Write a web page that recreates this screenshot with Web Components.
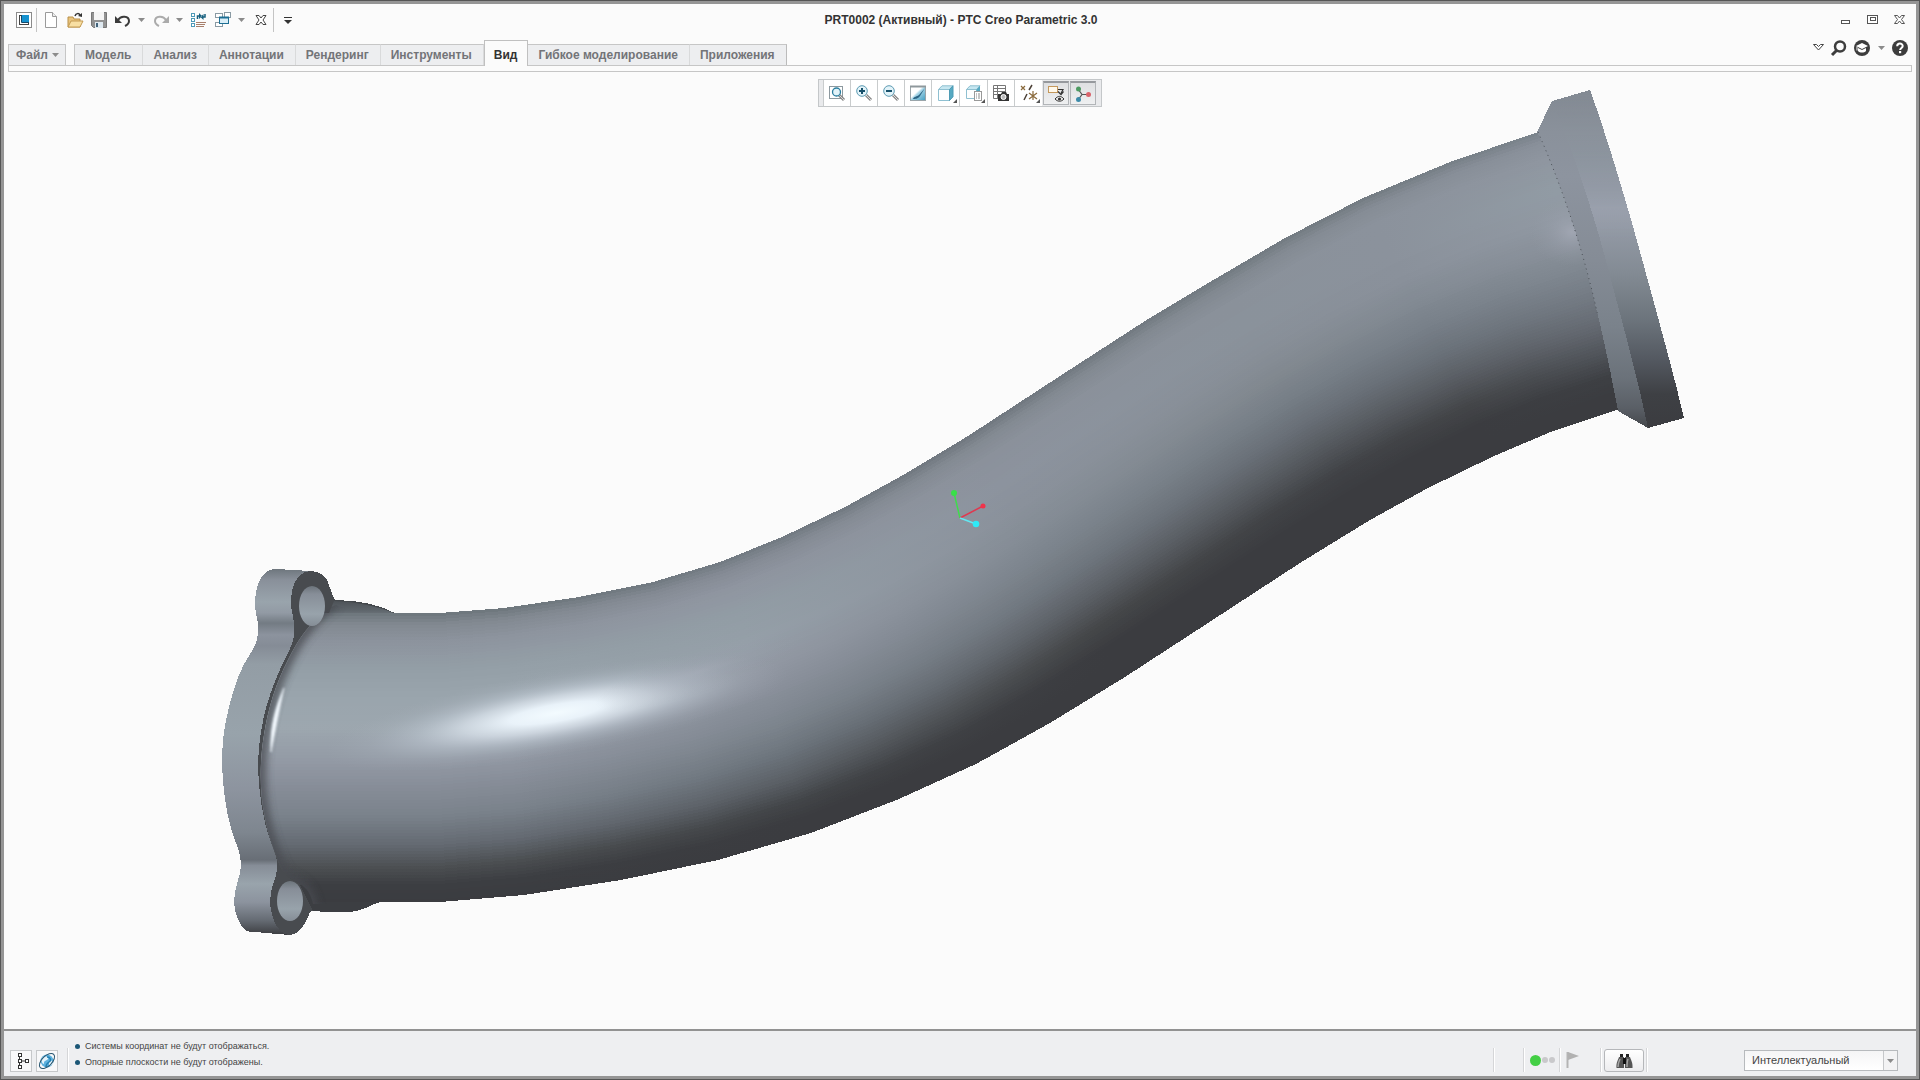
<!DOCTYPE html>
<html lang="ru">
<head>
<meta charset="utf-8">
<title>PRT0002 (Активный) - PTC Creo Parametric 3.0</title>
<style>
html, body { margin: 0; height: 100%; }
body { font-family: "Liberation Sans", Arial, sans-serif; font-size: 12px; color: #333; overflow: hidden; }
</style>
</head>
<body>
<creo-window></creo-window>

<script>
const RESET = `
  :host, *, *::before { box-sizing: border-box; }
  button { border: 0; background: none; padding: 0; margin: 0; font: inherit; color: inherit; display: block; }
  svg { display: block; }
`;

/* ---------- icon set ---------- */
const ICONS = {
  app: `<rect x=".5" y=".5" width="15" height="15" fill="#fff" stroke="#8b8b8b"/><rect x="3.5" y="3.5" width="9" height="9" fill="#fff" stroke="#444"/><rect x="6" y="3" width="7" height="7" fill="#1592cf"/><path d="M5.500 3v7.500H13" fill="none" stroke="#14496b"/>`,
  file: `<path d="M2.5.5h7l4 4v11h-11z" fill="#fff" stroke="#9a9a9a"/><path d="M9.500.5v4h4" fill="#eee" stroke="#9a9a9a"/>`,
  open: `<path d="M1 15V5h5l1 2h6v8z" fill="#e9c47d" stroke="#b98f46"/><path d="M1 15l3-6h12l-3 6z" fill="#f8dfa3" stroke="#c39a52"/><path d="M8 4c1-3 4-3 5-1" fill="none" stroke="#333" stroke-width="1.500"/><path d="M11 4l4-3v4z" fill="#333"/>`,
  save: `<path d="M.5.5h15v15H2.500l-2-2z" fill="#929292" stroke="#777"/><rect x="3" y="0" width="10" height="8" fill="#f5f5f5"/><rect x="4" y="10" width="8" height="6" fill="#dfe9f0"/><rect x="5" y="11" width="2" height="4" fill="#42637b"/>`,
  undo: `<path d="M3 8c3-5 11-4 11 1 0 3-2 4-4 5" fill="none" stroke="#3c3c3c" stroke-width="2"/><path d="M0 4v7h7z" fill="#3c3c3c"/>`,
  redo: `<path d="M13 8C10 3 2 4 2 9c0 3 2 4 4 5" fill="none" stroke="#ababab" stroke-width="2"/><path d="M16 4v7H9z" fill="#ababab"/>`,
  regen: `<g fill="#fff" stroke="#4d99b7"><rect x=".5" y="1.500" width="3" height="3"/><rect x=".5" y="6.500" width="3" height="3"/><rect x=".5" y="11.500" width="3" height="3"/></g><path d="M6.500 7V4h2M14 2v3h-2" fill="none" stroke="#17607f" stroke-width="1.500"/><path d="M8 1l3 3-3 3zM12.500 2l-3 3 3 3z" fill="#17607f"/><path d="M5 10.500h10M5 12.500h9M5 14.500h8" stroke="#a77f6b"/>`,
  windows: `<g fill="#fff" stroke="#8a9aa3"><rect x=".5" y="1.500" width="7" height="4"/><rect x=".5" y="10.500" width="7" height="4"/><rect x="9.500" y=".5" width="6" height="5"/></g><rect x="4.500" y="5.500" width="9" height="6" fill="#d9eef7" stroke="#1d6f94"/><path d="M4 5.500h10" stroke="#1d6f94" stroke-width="2"/>`,
  cross: `<path d="M3 3.500h3l2 2.500 2-2.500h3L10 8l3 4.500h-3L8 10l-2 2.500H3L6 8z" fill="#fff" stroke="#444"/>`,
  caretG: `<path d="M1 6h7l-3.500 4z" fill="#8b8b8b"/>`,
  caretD: `<path d="M4 5.500h8" stroke="#333"/><path d="M4 8h8l-4 4z" fill="#333"/>`,
  min: `<rect x="1.500" y="8.500" width="8" height="3" fill="#fff" stroke="#555"/>`,
  restore: `<rect x=".5" y="3.500" width="10" height="8" fill="#fff" stroke="#555"/><rect x="3.500" y="5.500" width="5" height="3" fill="#fff" stroke="#555"/>`,
  close: `<path d="M.5 3.500h3L5.500 6l2-2.500h3l-3 4 3 4h-3l-2-2.500-2 2.500h-3l3-4z" fill="#fff" stroke="#555"/>`,
  chev: `<path d="M.5 4.500h3l2 2 2-2h3l-5 5.500z" fill="#fff" stroke="#444"/>`,
  search: `<circle cx="9" cy="6.500" r="5" fill="none" stroke="#3d3d3d" stroke-width="2.500"/><path d="M5.500 10.500L1 15" stroke="#3d3d3d" stroke-width="3"/>`,
  learn: `<circle cx="8" cy="8" r="8" fill="#3d3d3d"/><path d="M2 6l6-3 6 3-6 3z" fill="#fff"/><path d="M4 8v3c2 2 6 2 8 0V8l-4 2z" fill="#fff"/><path d="M3 6.500v4" stroke="#fff"/>`,
  help: `<circle cx="8" cy="8" r="8" fill="#3d3d3d"/><path d="M5.200 6.200c0-3.600 5.600-3.400 5.500-.2 0 1.900-2.600 2-2.600 4" fill="none" stroke="#fff" stroke-width="2"/><rect x="7" y="11" width="2.200" height="2.200" fill="#fff"/>`,
  refit: `<rect x=".5" y="1.500" width="13" height="12" fill="#fff" stroke="#8d999f"/><path d="M10 10l5 5" stroke="#888" stroke-width="3"/><path d="M10 10l5 5" stroke="#d8d8d8"/><circle cx="7.500" cy="7" r="4" fill="#e2f3f9" stroke="#2a7d9e" stroke-width="1.300"/>`,
  zin: `<path d="M10 10l5 5" stroke="#888" stroke-width="3"/><path d="M10 10l5 5" stroke="#ddd"/><circle cx="6" cy="6" r="5.300" fill="#e2f3f9" stroke="#5d9bb3"/><path d="M3 6h6M6 3v6" stroke="#17506b" stroke-width="2"/>`,
  zout: `<path d="M10 10l5 5" stroke="#888" stroke-width="3"/><path d="M10 10l5 5" stroke="#ddd"/><circle cx="6" cy="6" r="5.300" fill="#e2f3f9" stroke="#5d9bb3"/><path d="M3 6h6" stroke="#17506b" stroke-width="2"/>`,
  repaint: `<defs><linearGradient id="g" x1="0" y1="0" x2="1" y2="1"><stop offset=".4" stop-color="#fff"/><stop offset=".5" stop-color="#a5d4e6"/><stop offset="1" stop-color="#3f9dc2"/></linearGradient></defs><rect x=".5" y="1.500" width="15" height="14" fill="url(#g)" stroke="#9aa5aa"/><path d="M3 14c1-3 4-2 6-4l6-7-5 8c-2 3-5 3-7 3z" fill="#2b6484"/><path d="M0 1.500h16" stroke="#8f989c" stroke-width="2"/>`,
  cube: `<path d="M.5 4.500h11v11H.5z" fill="#fdfefe" stroke="#8fc0d1"/><path d="M.5 4.500L4 .8h11l-3.500 3.700z" fill="#c6e7f1" stroke="#8fc0d1"/><path d="M11.500 4.500L15 .8v11l-3.500 3.700z" fill="#56a9c2" stroke="#4d9bb4"/>`,
  cubelist: `<path d="M.5 4.500h10v9H.5z" fill="#fdfefe" stroke="#8fc0d1"/><path d="M.5 4.500L4 .8h10l-3.500 3.700z" fill="#c6e7f1" stroke="#8fc0d1"/><path d="M10.500 4.500L14 .8v9l-3.500 3.700z" fill="#56a9c2"/><rect x="8.500" y="6.500" width="7" height="9" fill="#fff" stroke="#999"/><path d="M10 9h1m1 0h2M10 11h1m1 0h2M10 13h1m1 0h2" stroke="#888"/>`,
  camera: `<path d="M.5.500h12v13H.5zM.5 3.500h12M.5 6.500h12M.5 9.500h12M4.500.500v13" fill="#fff" stroke="#777"/><path d="M5 9h3l1-2h4l1 2h2v7H5z" fill="#333"/><circle cx="10.500" cy="12" r="2.500" fill="#bbb" stroke="#fff"/>`,
  datum: `<g stroke="#8a6a3c" fill="none" stroke-width="1.200"><path d="M0 1l4 4M4 1L0 5M12 6v9M8 8l8 6M16 8l-8 6"/></g><path d="M11 0L8 5M6 9l-3 6" stroke="#4d4238" stroke-width="1.500"/>`,
  annot: `<rect x=".5" y=".5" width="9" height="6" fill="#fff8ea" stroke="#c4985c"/><path d="M10 3.500h5l-2 4" fill="none" stroke="#333" stroke-width="1.200"/><path d="M10 5.500l3 3 2.500-3" fill="none" stroke="#333" stroke-width="1.200"/><path d="M7 13c3-3.500 6-3.500 9 0-3 3-6 3-9 0z" fill="#eee" stroke="#333"/><circle cx="11.500" cy="13" r="1.600" fill="#333"/>`,
  spin: `<path d="M3 3l4 5.500L3 14M7 8.500h7" fill="none" stroke="#555" stroke-width="1.200"/><circle cx="3.500" cy="3" r="2.500" fill="#4d9b62"/><circle cx="3.500" cy="13.500" r="2.500" fill="#3c8ba9"/><circle cx="13.500" cy="8.500" r="2.500" fill="#d9636b"/>`,
  tree: `<path d="M6.500 4v8M6.500 8h6" stroke="#333" fill="none"/><g fill="#fff" stroke="#333"><rect x="5.500" y=".5" width="3" height="3"/><rect x="5.500" y="6.500" width="3" height="3"/><rect x="5.500" y="12.500" width="3" height="3"/><rect x="12.500" y="6.500" width="3" height="3"/></g>`,
  globe: `<circle cx="8" cy="8" r="6.500" fill="#5db1de"/><path d="M4 4c3-2 6 0 5 2S5 7 5 10 2 8 2 7zM10 8c3-1 4 0 4 2s-3 3-4 3z" fill="#e3f3fb"/><path d="M8 4c3 0 5 3 2 5s-3 3-3 5" fill="none" stroke="#2380b2" stroke-width="1.500"/><ellipse cx="8" cy="8" rx="9.500" ry="5" transform="rotate(-45 8 8)" fill="none" stroke="#27556f"/>`,
  bino: `<path d="M4 1h3v4H4zM10 1h3v4h-3z" fill="#222"/><path d="M3 4h5v11H.5C0 10 2 7 3 4z" fill="#555"/><path d="M9 4h5c1 3 3 6 2.500 11H9z" fill="#555"/><path d="M7 5h3v6H7z" fill="#111"/><path d="M2 14c0-4 1-6 2-8M11 14c0-4 0-6 1-8" stroke="#a5a5a5" stroke-width="1.500" fill="none"/>`,
  flag: `<path d="M1.500 0v16" stroke="#b4b4b4" stroke-width="2"/><path d="M2 0l11 4-11 4z" fill="#b1b1b1"/>`
};
class CreoIcon extends HTMLElement {
  constructor() { super(); this.attachShadow({ mode: 'open' }); }
  connectedCallback() {
    const w = +(this.getAttribute('w') || 16), h = +(this.getAttribute('h') || 16);
    this.shadowRoot.innerHTML = `<style>:host{display:block;flex:none}svg{display:block;overflow:visible}</style>
      <svg width="${w}" height="${h}" viewBox="0 0 ${w} ${h}" aria-hidden="true">${ICONS[this.getAttribute('name')]}</svg>`;
  }
}
customElements.define('creo-icon', CreoIcon);

function define(name, html) {
  const tpl = document.createElement('template');
  tpl.innerHTML = html;
  customElements.define(name, class extends HTMLElement {
    constructor() { super(); this.attachShadow({ mode: 'open' }).append(tpl.content.cloneNode(true)); }
  });
}

/* ---------- title bar ---------- */
const tool = (icon, label, cls = '', w = 16) => `<button class="${cls}" aria-label="${label}"><creo-icon name="${icon}" w="${w}"></creo-icon></button>`;
define('creo-titlebar', `<style>${RESET}
  :host { display: grid; grid-template-columns: 1fr auto 1fr; align-items: center; height: 32px; padding: 0 10px 0 12px; }
  .quick { display: flex; align-items: center; gap: 8px; }
  .caret { margin-left: -2px; }
  .sep { width: 1px; height: 24px; background: #c4c4c4; margin: 0 -2px 0 -4px; }
  h1 { margin: 0; font-size: 12px; line-height: 16px; font-weight: bold; color: #333; }
  .win { display: flex; gap: 15px; justify-content: flex-end; }
</style>
<div class="quick">
  ${tool('app', 'Окно')}<span class="sep"></span>
  ${tool('file', 'Создать')}${tool('open', 'Открыть')}${tool('save', 'Сохранить')}
  ${tool('undo', 'Отменить')}${tool('caretG', 'Список отмен', 'caret', 8)}
  ${tool('redo', 'Повторить')}${tool('caretG', 'Список повторов', 'caret', 8)}
  ${tool('regen', 'Регенерировать')}${tool('windows', 'Окна')}${tool('caretG', 'Список окон', 'caret', 8)}
  ${tool('cross', 'Закрыть окно')}<span class="sep"></span>${tool('caretD', 'Настроить')}
</div>
<h1>PRT0002 (Активный) - PTC Creo Parametric 3.0</h1>
<div class="win">${tool('min', 'Свернуть', '', 12)}${tool('restore', 'Восстановить', '', 12)}${tool('close', 'Закрыть', '', 12)}</div>`);

/* ---------- ribbon ---------- */
define('creo-tab', `<style>${RESET}
  :host { display: block; height: 21px; border-top: 1px solid #c6c6c6; border-right: 1px solid #d9dadb; background: #edeef0; color: #737478; }
  button { height: 20px; padding: 0 11px 0 10px; font-weight: bold; font-size: 12px; line-height: 20px; display: flex; align-items: center; gap: 3px; white-space: nowrap; }
  :host([first]) { border-left: 1px solid #c6c6c6; }
  :host([last]) { border-right-color: #bbb; }
  :host([file]) { border: 1px solid #c6c6c6; border-bottom: 0; margin-right: 8px; }
  :host([file]) button { padding: 0 6px 0 7px; }
  :host([active]) { height: 26px; margin-bottom: -1px; border: 1px solid #c0c0c0; border-bottom: 0; background: #fbfbfb; color: #333; position: relative; }
  :host([active]) button { height: 25px; padding: 3px 10px 0 9px; }
</style><button role="tab"><slot></slot></button>`);

define('creo-ribbon', `<style>${RESET}
  :host { display: block; padding: 0 4px; }
  .row { display: flex; justify-content: space-between; align-items: flex-end; height: 29px; }
  .tabs { display: flex; align-items: flex-end; }
  .help { display: flex; align-items: center; gap: 7px; height: 16px; align-self: flex-start; margin: 4px 4px 0 0; }
  .strip { height: 7px; border: 1px solid #c6c6c6; background: #fbfbfb; }
</style>
<div class="row">
  <nav class="tabs" role="tablist">
    <creo-tab file>Файл <creo-icon name="caretG" w="8"></creo-icon></creo-tab>
    <creo-tab first>Модель</creo-tab><creo-tab>Анализ</creo-tab><creo-tab>Аннотации</creo-tab>
    <creo-tab>Рендеринг</creo-tab><creo-tab>Инструменты</creo-tab><creo-tab active>Вид</creo-tab>
    <creo-tab>Гибкое моделирование</creo-tab><creo-tab last>Приложения</creo-tab>
  </nav>
  <div class="help">${tool('chev', 'Свернуть ленту', '', 11)}${tool('search', 'Поиск')}${tool('learn', 'Обучение')}${tool('caretG', 'Ещё', 'c', 8)}${tool('help', 'Справка')}</div>
</div>
<div class="strip"></div>`);

/* ---------- floating graphics toolbar ---------- */
const gbtn = (icon, label, cls = '') => `<button class="${cls}" aria-label="${label}"><creo-icon name="${icon}"></creo-icon></button>`;
define('creo-viewbar', `<style>${RESET}
  :host { display: flex; height: 28px; border: 1px solid #c4c7c9; background: #e9eaec; padding: 0 5px 0 4px; }
  button { width: 27px; height: 26px; background: #fff; border-left: 1px solid #c9cccd; display: flex; align-items: center; justify-content: center; position: relative; }
  .menu { width: 28px; }
  .menu::after { content: ""; position: absolute; right: 2px; bottom: 3px; border: 2px solid transparent; border-right-color: #555; border-bottom-color: #555; }
  .on { background: linear-gradient(#dfe0e2, #eff0f1); border: 1px solid #b2b5b8; border-top: 2px solid #96999d; margin: 1px 0 1px 1px; height: 24px; width: 26px; }
</style>
${gbtn('refit', 'Вписать')}${gbtn('zin', 'Увеличить')}${gbtn('zout', 'Уменьшить')}${gbtn('repaint', 'Перерисовать')}
${gbtn('cube', 'Стиль отображения', 'menu')}${gbtn('cubelist', 'Сохранённые ориентации', 'menu')}${gbtn('camera', 'Диспетчер видов')}
${gbtn('datum', 'Фильтры опорных элементов', 'menu')}${gbtn('annot', 'Показ аннотаций', 'on')}${gbtn('spin', 'Центр вращения', 'on')}`);

/* ---------- shaded model ---------- */
const TOP = [[240,613],[396,613],[440,613],[504,608],[579,597],[653,582],[720,562],[782,537],[845,507],[905,474],[968,436],[1060,376],[1145,321],[1215,279],[1285,238],[1363,198],[1450,162],[1538,132],[1590,116]];
const BOT = [[240,902],[378,902],[440,902],[524,895],[621,880],[718,860],[811,833],[899,799],[976,764],[1050,723],[1125,677],[1208,623],[1300,563],[1370,520],[1428,488],[1494,456],[1553,431],[1619,409],[1660,395]];
const LEVEL = [0,.04,.1,.2,.3,.4,.5,.6,.7,.8,.88,.94,1];
const RAMPS = [
  [0,  '6c757b 828991 8b929c 949fa7 9aa5ad 9da7af 949ba6 878d98 7a828b 646a72 4d5053 3c3e42 3b3c40'],
  [3,  '6c757b 828991 8d949e 949fa7 9aa5ad 9ca6ae 949ba6 878d98 7a828b 646a72 4b4e51 3c3e42 3b3c40'],
  [6,  '727a81 858b95 8f95a0 929da5 959fa8 9298a3 888e99 7d858e 6d757d 595e64 424548 3b3c40 3b3c40'],
  [10, '6f777e 838a92 8b919b 8c939e 8a919b 848c95 7b838b 6e757d 5c6066 454749 3b3c40 3b3c40 3b3c40'],
  [13, '727a81 828991 8a919a 8a929b 888f98 81888f 757d85 676d75 55595e 404246 3b3c40 3b3c40 3b3c40'],
  [15, '737b82 858c95 8b929c 8b929c 8a919b 828a93 777f88 6a7179 595d63 444649 3b3c40 3b3c40 3b3c40'],
  [17, '7a838b 89909a 8f96a0 919ba4 9199a3 8a919b 7f8790 737a83 656a72 50545a 3e4044 3b3c40 3b3c40'],
  [18, '7a838b 89909a 8f96a0 919ba4 9199a3 8a919b 7f8790 737a83 656a72 50545a 3e4044 3b3c40 3b3c40']
].map(([s, c]) => [s, c.split(' ').map(h => [0, 2, 4].map(i => parseInt(h.substr(i, 2), 16)))]);
const mix = (a, b, k) => a + (b - a) * k;
function rampColor(ramp, t) {
  let i = 0;
  while (i < LEVEL.length - 2 && t > LEVEL[i + 1]) i++;
  const k = (t - LEVEL[i]) / (LEVEL[i + 1] - LEVEL[i]);
  return 'rgb(' + ramp[i].map((v, c) => Math.round(mix(v, ramp[i + 1][c], k))).join() + ')';
}
function pipeBands(count) {
  let defs = '', out = '';
  const at = t => TOP.map((p, i) => [mix(p[0], BOT[i][0], t), mix(p[1], BOT[i][1], t)]);
  for (let n = 0; n < count; n++) {
    const mid = (n + .5) / count, line = at(mid), x0 = line[0][0], x1 = line[line.length - 1][0];
    defs += `<linearGradient id="b${n}" gradientUnits="userSpaceOnUse" x1="${x0}" x2="${x1}" y1="0" y2="0">` +
      RAMPS.map(([s, r]) => `<stop offset="${((line[s][0] - x0) / (x1 - x0)).toFixed(4)}" stop-color="${rampColor(r, mid)}"/>`).join('') + '</linearGradient>';
    const a = at(n / count), b = at(Math.min(1, (n + 2) / count)).reverse();
    out += `<polygon fill="url(#b${n})" points="${a.concat(b).map(p => p.map(v => v.toFixed(1)).join()).join(' ')}"/>`;
  }
  return `<defs>${defs}</defs>${out}`;
}
const stops = list => list.map(([o, c, a]) => `<stop offset="${o}" stop-color="${c}"${a === undefined ? '' : ` stop-opacity="${a}"`}/>`).join('');
const RIM = 'M336 603C325 608 318 617 309 627C300 637 294 648 288 660C276 683 268 708 264 735C259 765 260 795 265 818C269 838 275 854 281 868C287 880 296 880 303 886C309 892 312 900 313 911';
define('creo-model', `<style>:host{display:block}svg{display:block;width:100%;height:100%}</style>
<svg viewBox="4 72 1912 957" role="img" aria-label="Модель PRT0002">
  <defs>
    <linearGradient id="side" gradientUnits="userSpaceOnUse" x1="0" x2="0" y1="569" y2="935">${stops([[0,'#6e767d'],[.03,'#89909a'],[.09,'#99a4ac'],[.12,'#929aa4'],[.148,'#737b83'],[.18,'#8c939e'],[.21,'#858c96'],[.26,'#939da5'],[.45,'#98a3ab'],[.6,'#8d949f'],[.72,'#7e868f'],[.795,'#686e76'],[.81,'#868d97'],[.86,'#99a4ac'],[.91,'#8c939e'],[.96,'#656b73'],[1,'#3b3c40']])}</linearGradient>
    <linearGradient id="hole" x1="0" x2="0" y1="0" y2="1">${stops([[0,'#6c747b'],[.2,'#878e98'],[.7,'#98a3ab'],[1,'#858d96']])}</linearGradient>
    <linearGradient id="rim" gradientUnits="userSpaceOnUse" x1="0" x2="0" y1="90" y2="428">${stops([[0,'#868d96'],[.1,'#8b939c'],[.2,'#909ba3'],[.28,'#989fab'],[.35,'#a0a6b3'],[.44,'#8f96a1'],[.54,'#838b94'],[.68,'#6c747c'],[.8,'#535860'],[.9,'#3e4044'],[1,'#3b3c40']])}</linearGradient>
    <linearGradient id="cone" gradientUnits="userSpaceOnUse" x1="0" x2="0" y1="92" y2="428">${stops([[0,'#838a93'],[.12,'#8a919b'],[.25,'#8d949f'],[.5,'#858c96'],[.7,'#7a828b'],[.85,'#6b727a'],[.94,'#5a5f66'],[1,'#44474b']])}</linearGradient>
    <linearGradient id="rimfade" gradientUnits="userSpaceOnUse" x1="0" x2="0" y1="90" y2="240">${stops([[0,'#000'],[.4,'#333'],[1,'#fff']])}</linearGradient>
    <radialGradient id="shine">${stops([[0,'#f3fbff',1],[.2,'#eef7fe',.94],[.4,'#dfe8f1',.7],[.6,'#c9d3de',.4],[.8,'#b7c0cb',.15],[1,'#a8b0bb',0]])}</radialGradient>
    <radialGradient id="glow">${stops([[0,'#a9aebb',.7],[.5,'#9ca2ae',.35],[1,'#949ba5',0]])}</radialGradient>
    <linearGradient id="bulge" gradientUnits="userSpaceOnUse" x1="0" x2="0" y1="600" y2="628">${stops([[0,'#4b5055'],[.35,'#5d646a'],[.6,'#727a81'],[1,'#858c95']])}</linearGradient>
    <filter id="soft" x="-50%" y="-50%" width="200%" height="200%"><feGaussianBlur stdDeviation="4"/></filter>
    <filter id="thin" x="-200%" y="-50%" width="500%" height="200%"><feGaussianBlur stdDeviation="1.200"/></filter>
    <clipPath id="flow"><path d="M336 605C348 610 372 613 396 613L440 613L440 500L1538 100L1700 110L1700 400L1500 560L900 860L440 904L378 903C350 904 330 904 313 904C311 896 309 891 303 886C296 880 287 880 281 868C275 854 269 838 265 818C260 795 259 765 264 735C268 708 276 683 288 660C294 648 300 637 309 627C318 617 325 608 336 605Z"/></clipPath>
  </defs>
  <g shape-rendering="crispEdges">
    <path fill="url(#side)" d="M310 571L276 569C262 568 255 586 255 604C255 613 258 619 258 627C258 638 257 644 250 654C241 667 234 686 229 707C223 730 222 748 222 765C223 790 226 812 232 832C236 844 241 853 241 865C241 877 234 886 234 902C235 914 238 921 243 928C247 932 250 932 255 932L290 935L330 850L330 600Z"/>
    <path fill="#484b4f" d="M310 571C296 572 291 588 291 602C291 613 295 619 294 632C294 641 291 647 286 657C271 686 258 724 258 768C259 795 263 820 270 840C274 851 278 857 277 870C276 880 270 886 270 902C271 920 279 935 290 935C299 934 303 927 308 917C309 912 312 910 316 910L345 890L345 606C336 604 333 598 330 588C327 576 321 571 310 571Z"/>
    <path fill="#3c3e42" d="M300 885L313 911C334 913 352 912 357 911C368 908 372 904 380 902V880Z"/>
    <path fill="#44484c" d="M334 600C360 600 380 605 397 614L396 640H330Z"/>
  </g>
  <path fill="url(#bulge)" d="M334 601C358 602 376 606 394 613V640H318Z"/>
  <g clip-path="url(#flow)">
    <g shape-rendering="crispEdges">${pipeBands(96)}</g>
    <path d="${RIM}" fill="none" stroke="#484c51" stroke-width="10" filter="url(#soft)" opacity=".9"/>
    <path d="M284 688C275 708 270 728 271 752C275 732 279 710 284 688Z" fill="#f4faff" stroke="#dfe7ee" stroke-width="1" filter="url(#thin)"/>
    <ellipse cx="0" cy="0" rx="235" ry="42" fill="url(#shine)" transform="translate(556 713) rotate(-10)"/>
    <ellipse cx="0" cy="0" rx="110" ry="22" fill="url(#glow)" transform="translate(700 671) rotate(-18)" opacity=".5"/>
    <ellipse cx="1572" cy="232" rx="42" ry="34" fill="url(#glow)"/>
  </g>
  <ellipse cx="312" cy="606" rx="13" ry="20" fill="url(#hole)"/>
  <ellipse cx="290" cy="901" rx="13" ry="20" fill="url(#hole)"/>
  <mask id="fade" maskUnits="userSpaceOnUse" x="1500" y="72" width="220" height="400"><rect x="1500" y="72" width="220" height="400" fill="url(#rimfade)"/></mask>
  <g shape-rendering="crispEdges">
    <path fill="url(#cone)" d="M1537 132L1552 101L1590 90C1610 145 1633 225 1645 270L1660 333L1648 428L1618 411C1606 345 1588 268 1570 215C1558 180 1549 157 1537 132Z"/>
    <path mask="url(#fade)" fill="url(#rim)" d="M1552 101L1590 90C1610 145 1633 225 1645 270C1660 325 1674 375 1684 418L1648 428C1637 375 1623 325 1611 280C1596 220 1573 150 1552 101Z"/>
  </g>
  <path d="M1538 132C1549 157 1558 180 1570 215C1580 245 1590 280 1598 316" fill="none" stroke="#4b5056" stroke-dasharray="1 4"/>
  <g fill="none" stroke-width="1.500">
    <path d="M960 518L954 493" stroke="#3fdc4c"/><path d="M960 518L983 506" stroke="#e0384f"/><path d="M960 518L976 524" stroke="#62e8f2"/>
  </g>
  <circle cx="954" cy="493" r="3" fill="#39e048"/><circle cx="983" cy="506" r="2.500" fill="#f0334a"/><circle cx="976" cy="524" r="3.300" fill="#2eeaf7"/>
</svg>`);

/* ---------- status bar ---------- */
define('creo-status', `<style>${RESET}
  :host { display: flex; justify-content: space-between; height: 47px; border-top: 2px solid #929292; background: #eeeff1; padding: 0 18px 0 6px; }
  .left, .right { display: flex; }
  .sq { width: 22px; height: 22px; border: 1px solid #c6c8ca; background: #f8f8f9; margin: 19px 4px 0 0; display: flex; align-items: center; justify-content: center; }
  .sep { width: 2px; height: 24px; background: #d5d6d8; border-right: 1px solid #fff; margin-top: 17px; }
  .left .sep { margin-left: 5px; }
  ul { list-style: none; margin: 7px 0 0 6px; padding: 0; font-size: 9px; line-height: 16px; color: #444; }
  li { display: flex; align-items: center; gap: 5px; }
  li::before { content: ""; width: 5px; height: 5px; border-radius: 50%; background: #1b5676; }
  .gap { width: 28px; }
  .lights { width: 34px; display: flex; align-items: center; gap: 1px; padding-left: 5px; height: 24px; margin-top: 17px; }
  i { width: 6px; height: 6px; border-radius: 50%; background: #c9c9cb; }
  i.go { width: 11px; height: 11px; background: #43cf45; }
  .flag { width: 39px; height: 24px; margin-top: 17px; padding-left: 5px; }
  .find { width: 40px; height: 23px; margin: 18px 2px 0; border: 1px solid #b5b7ba; border-radius: 3px; background: linear-gradient(#fff, #ececee); display: flex; align-items: center; justify-content: center; }
  label { position: relative; width: 154px; height: 21px; margin: 19px 0 0 96px; display: block; }
  select { appearance: none; width: 100%; height: 21px; border: 1px solid #b7babd; border-radius: 0; background: linear-gradient(#f5f5f6, #fff); padding: 0 16px 0 7px; font: 11px/19px "Liberation Sans", Arial, sans-serif; color: #444; margin: 0; display: block; }
  .arrow { position: absolute; right: 1px; top: 1px; width: 14px; height: 19px; border-left: 1px solid #c6c8ca; background: #f3f3f4; pointer-events: none; display: flex; align-items: center; justify-content: center; }
</style>
<div class="left">
  <button class="sq" aria-label="Дерево модели"><creo-icon name="tree"></creo-icon></button>
  <button class="sq" aria-label="Браузер"><creo-icon name="globe"></creo-icon></button>
  <span class="sep"></span>
  <ul><li>Системы координат не будут отображаться.</li><li>Опорные плоскости не будут отображены.</li></ul>
</div>
<div class="right">
  <span class="sep"></span><span class="gap"></span><span class="sep"></span>
  <span class="lights"><i class="go"></i><i></i><i></i></span><span class="sep"></span>
  <button class="flag" aria-label="Уведомления"><creo-icon name="flag"></creo-icon></button><span class="sep"></span>
  <button class="find" aria-label="Найти"><creo-icon name="bino" w="17"></creo-icon></button><span class="sep"></span>
  <label><select aria-label="Фильтр выбора"><option>Интеллектуальный</option></select><span class="arrow"><creo-icon name="caretG" w="9"></creo-icon></span></label>
</div>`);

/* ---------- window ---------- */
define('creo-window', `<style>
  :host { display: flex; flex-direction: column; box-sizing: border-box; height: 100vh; border: 1px solid #555; background: #fbfbfb; box-shadow: inset 0 0 0 3px #959595; padding: 3px; }
  main { flex: 1; min-height: 0; position: relative; display: flex; }
  creo-model { flex: 1; min-width: 0; }
  creo-viewbar { position: absolute; top: 7px; left: 50%; transform: translateX(-50%); }
</style>
<creo-titlebar></creo-titlebar>
<creo-ribbon></creo-ribbon>
<main><creo-model></creo-model><creo-viewbar></creo-viewbar></main>
<creo-status></creo-status>`);
</script>
</body>
</html>
